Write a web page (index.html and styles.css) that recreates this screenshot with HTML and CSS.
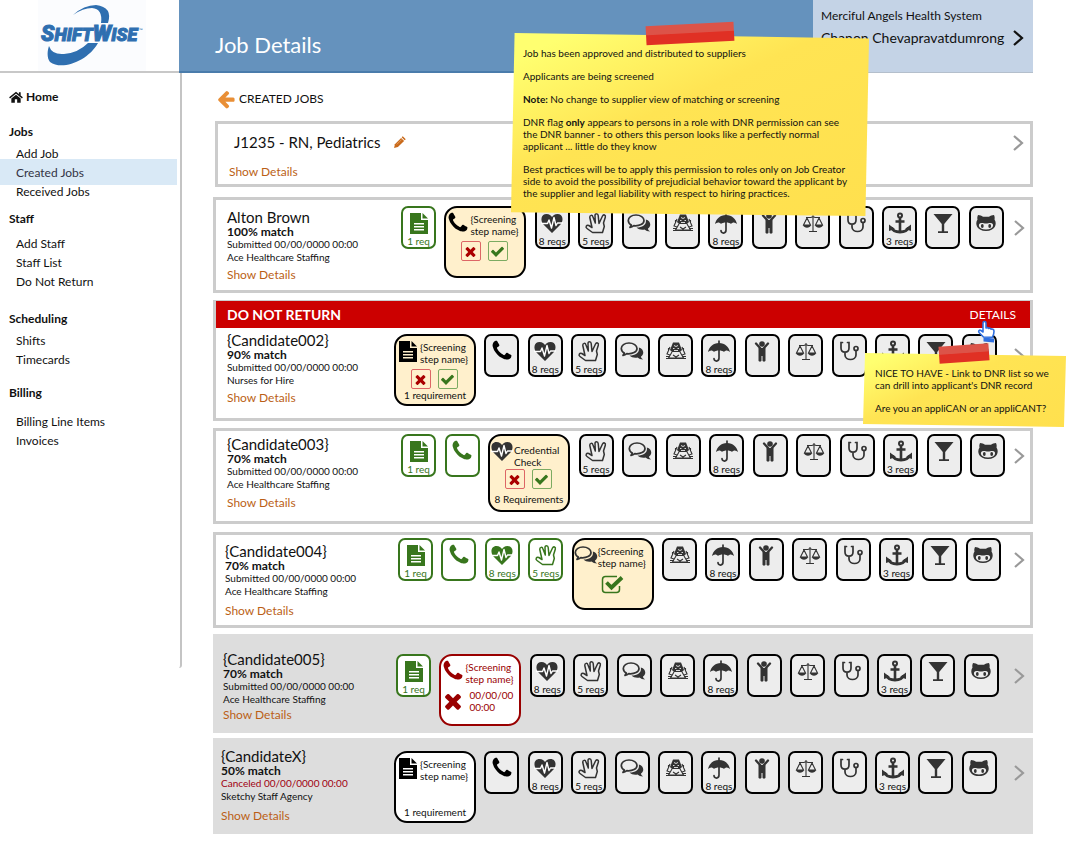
FILE: index.html
```html
<!DOCTYPE html>
<html lang="en">
<head>
<meta charset="utf-8">
<title>Job Details</title>
<link rel="stylesheet" href="styles.css">
</head>
<body>
<svg class="defs" aria-hidden="true">
  <symbol id="doc" viewBox="0 0 24 24"><path fill="currentColor" fill-rule="evenodd" d="M3 2h11v7h7v14H3zM7 12v1.500h10V12zM7 15v1.500h10V15zM7 18v1.500h10V18z"/><path fill="currentColor" d="M15.500 2L21 7.500H15.500z"/></symbol>
  <symbol id="phone" viewBox="0 0 1792 1792"><path fill="currentColor" d="M1600 1240q0 27-10 70.500t-21 68.500q-21 50-122 106-94 51-186 51-27 0-53-3.500t-57-12.500-47-14.500-55.500-20.500-49.500-18q-98-35-175-83-127-79-264-216t-216-264q-48-77-83-175-3-9-18-49.500t-20.500-55.500-14.500-47-12.500-57-3.500-53q0-92 51-186 56-101 106-122 25-11 68.500-21t70.500-10q14 0 21 3 18 6 53 76 11 19 30 54t35 63.500 31 53.500q3 4 17.500 25t21.500 35.500 7 28.500q0 20-28.500 50t-62 55-62 53-28.500 46q0 9 5 22.500t8.500 20.500 14 24 11.500 19q76 137 174 235t235 174q2 1 19 11.500t24 14 20.500 8.500 22.500 5q18 0 46-28.500t53-62 55-62 50-28.500q14 0 28.500 7t35.500 21.500 25 17.500q25 15 53.500 31t63.500 35 54 30q70 35 76 53 3 7 3 21z"/></symbol>
  <symbol id="heart" viewBox="0 0 24 24"><path fill="currentColor" d="M12 22L3.500 13.500C0 9.500 1 3 6.500 3 9.500 3 11 4.500 12 6c1-1.500 2.500-3 5.500-3C23 3 24 9.500 20.500 13.500z"/><path fill="none" stroke="#fff" stroke-width="1.400" stroke-linejoin="round" d="M1 12.500h6.500L9 9l2.500 8L14 6.500l2 8 1.500-2.500H23"/></symbol>
  <symbol id="hand" viewBox="0 0 24 24"><path fill="none" stroke="currentColor" stroke-width="1.500" stroke-linejoin="round" d="M8.500 21.500L3 17.500C1 16 2.500 13.700 4.800 14.500L8 16.500 5.800 6.500C5.500 4 8.300 3.500 9 6L11.300 12 11 4.500C11 2 14 2 14.200 4.500L15 12.500 18.500 5C19.500 3 22 4 21.300 6.300L19.500 12 20.300 15.500 18.500 21.500z"/></symbol>
  <symbol id="comments" viewBox="0 0 24 24"><path fill="currentColor" d="M18.800 8.500c5.500 1.300 5.500 7 2.200 9 0 1.500 1 2 2 3-2.500 0-4-.7-5.500-2-3 .5-6 0-8-2 6.500 0 10.300-3.300 9.300-8z"/><path fill="none" stroke="currentColor" stroke-width="1.700" stroke-linejoin="round" d="M9 4C4.500 4 1.300 6.500 1.300 9.500c0 2 1.200 3.500 3 4.500l-1.300 2.500c1.500-.3 2.800-1 3.800-1.800C12.500 15.200 17 13 17 9.500 17 6.500 13.500 4 9 4z"/></symbol>
  <symbol id="crew" viewBox="0 0 24 24"><path fill="currentColor" d="M9 3.500h6l3 7.500-2 2H8l-2-2z"/><path fill="none" stroke="currentColor" stroke-width="1.100" d="M6 8l-3 7 3 1M18 8l3 7-3 1M4.500 9v3M19.500 9v3M8 13l-3.500 6h15L16 13M2 17.500h4M18 17.500h4M2 19.500h20M9 16l3 2 3-2"/><path fill="none" stroke="#ededed" stroke-width=".9" d="M10 6.500l2 1 2-1M9 9.500h1.500M13.500 9.500H15M10 11.500h4"/></symbol>
  <symbol id="umbrella" viewBox="0 0 24 24"><path fill="currentColor" d="M12 4c6 0 10 4 11 9-2-2-4.500-2-6 0-1.500-2-8.500-2-10 0-1.500-2-4-2-6 0C2 8 6 4 12 4z"/><path fill="none" stroke="currentColor" stroke-width="1.700" stroke-linecap="round" d="M12 2v17c0 4-5 4-5 .5"/></symbol>
  <symbol id="child" viewBox="0 0 24 24"><circle cx="12" cy="5" r="2.800" fill="currentColor"/><path fill="none" stroke="currentColor" stroke-width="2.300" stroke-linecap="round" d="M6 4.500l4.500 5M18 4.500l-4.500 5"/><path fill="currentColor" d="M8.500 9h7v12.500c0 1.500-3 1.500-3 0V17h-1v4.500c0 1.500-3 1.500-3 0z"/></symbol>
  <symbol id="scale" viewBox="0 0 24 24"><g fill="none" stroke="currentColor" stroke-width="1.100"><path d="M12 4v16M8 20.500h8M5 6.500h5l2-1 2 1h5M6 7l-3.500 7h7zM18 7l-3.500 7h7z"/></g><path fill="currentColor" d="M2 14h8c-1 3.500-7 3.500-8 0zM14 14h8c-1 3.500-7 3.500-8 0z"/></symbol>
  <symbol id="steth" viewBox="0 0 24 24"><g fill="none" stroke="currentColor" stroke-width="1.700" stroke-linecap="round"><path d="M5.500 3.500H4V9c0 5.500 8 5.500 8 0V3.500h-1.500M8 13.500V16c0 6 11 6 11 0v-4"/><circle cx="19" cy="9.500" r="2"/></g></symbol>
  <symbol id="anchor" viewBox="0 0 24 24"><g fill="none" stroke="currentColor"><circle cx="12" cy="4.500" r="2" stroke-width="2"/><path stroke-width="2.600" d="M12 7v14M7.500 10.500h9"/><path stroke-width="2.800" d="M3.500 16.500c2 6 15 6 17 0"/></g><path fill="currentColor" d="M1 20v-6.500L7 18zM23 20v-6.500L17 18z"/></symbol>
  <symbol id="glass" viewBox="0 0 24 24"><path fill="currentColor" d="M2.500 3h19L13.200 13v7.300H17V22H7v-1.700h3.800V13z"/></symbol>
  <symbol id="cat" viewBox="0 0 24 24"><path fill="currentColor" fill-rule="evenodd" d="M4 4c2 0 3.500.8 5 1.700h6C16.500 4.800 18 4 20 4c1 2 .7 3.500.5 4.500 3 4.500.5 11.500-8.500 11.500S.5 13 3.500 8.500C3.300 7.500 3 6 4 4zM7.500 12c-4 0-4 6.500 4.500 6.500s8.500-6.500 4.500-6.500c-2 0-2.500.5-4.500.5s-2.500-.5-4.500-.5z"/><ellipse cx="8.300" cy="15" rx="1.400" ry="2" fill="currentColor"/><ellipse cx="15.700" cy="15" rx="1.400" ry="2" fill="currentColor"/></symbol>
  <symbol id="times" viewBox="0 0 1792 1792"><path fill="currentColor" d="M1490 1322q0 40-28 68l-136 136q-28 28-68 28t-68-28l-294-294-294 294q-28 28-68 28t-68-28l-136-136q-28-28-28-68t28-68l294-294-294-294q-28-28-28-68t28-68l136-136q28-28 68-28t68 28l294 294 294-294q28-28 68-28t68 28l136 136q28 28 28 68t-28 68l-294 294 294 294q28 28 28 68z"/></symbol>
  <symbol id="check" viewBox="0 0 1792 1792"><path fill="currentColor" d="M1671 566q0 40-28 68l-724 724-136 136q-28 28-68 28t-68-28l-136-136-362-362q-28-28-28-68t28-68l136-136q28-28 68-28t68 28l294 295 656-657q28-28 68-28t68 28l136 136q28 28 28 68z"/></symbol>
  <symbol id="checkbox" viewBox="0 0 24 24"><path fill="none" stroke="currentColor" stroke-width="1.500" d="M17 3.500H5.500a3 3 0 0 0-3 3v10a3 3 0 0 0 3 3h11a3 3 0 0 0 3-3V13"/><path fill="none" stroke="currentColor" stroke-width="3.800" d="M6.500 9.500l5 5L22 4.500"/></symbol>
  <symbol id="arrow" viewBox="0 0 1792 1792"><path fill="currentColor" d="M1664 896v128q0 53-32.500 90.500t-84.500 37.500h-704l293 294q38 36 38 90t-38 90l-75 76q-37 37-90 37-52 0-91-37l-651-652q-37-37-37-90 0-52 37-91l651-650q38-38 91-38 52 0 90 38l75 74q38 38 38 91t-38 91l-293 293h704q52 0 84.500 37.500t32.500 90.500z"/></symbol>
  <symbol id="home" viewBox="0 0 24 24"><path fill="currentColor" d="M12 8l8 6.500V22h-6v-6h-4v6H4v-7.500z"/><path fill="none" stroke="currentColor" stroke-width="2.400" d="M1 13.500L12 4.500l11 9"/><path fill="currentColor" d="M17 4h3v6l-3-2.500z"/></symbol>
  <symbol id="pencil" viewBox="0 0 24 24"><path fill="currentColor" d="M2 22l1.500-7L15 3.500l5.500 5.500L9 20.500z"/><path fill="currentColor" d="M16 2.500l2-2 5.500 5.500-2 2z"/><path stroke="#e8a468" stroke-width="1.500" d="M7 15.500L16 6.500"/></symbol>
  <symbol id="chevron" viewBox="0 0 12 20"><path fill="none" stroke="currentColor" stroke-width="2.200" d="M2 3l8 7-8 7"/></symbol>
</svg>

<div class="page">
<header class="top">
  <a class="logo" href="#" aria-label="ShiftWise">
    <svg viewBox="0 0 110 70" width="110" height="70">
      <g fill="#2f6fb0"><path d="M35 15Q46 5 58 5Q75 7 70 23H63Q65 9 54 8Q45 8 35 15z"/><path d="M11 46C9 52 9 58 12 62C24 71 50 61 60 43H50Q40 53 26 54Q14 55 11 46z"/>
      <text x="3" y="41" class="logo-text"><tspan class="logo-cap">S</tspan>HIFT<tspan class="logo-cap">W</tspan>ISE</text><text x="101" y="32" class="logo-tm">™</text></g>
    </svg>
  </a>
  <h1>Job Details</h1>
  <div class="account">
    <div class="org">Merciful Angels Health System</div>
    <button class="user" type="button"><span>Chanon Chevapravatdumrong</span><svg class="chev"><use href="#chevron"/></svg></button>
  </div>
</header>

<div class="body">
<nav class="side">
  <a class="home" href="#"><svg><use href="#home"/></svg>Home</a>
  <h2 class="jobs">Jobs</h2>
  <ul><li><a href="#">Add Job</a></li><li class="active"><a href="#">Created Jobs</a></li><li><a href="#">Received Jobs</a></li></ul>
  <h2 class="staff">Staff</h2>
  <ul><li><a href="#">Add Staff</a></li><li><a href="#">Staff List</a></li><li><a href="#">Do Not Return</a></li></ul>
  <h2 class="sched">Scheduling</h2>
  <ul><li><a href="#">Shifts</a></li><li><a href="#">Timecards</a></li></ul>
  <h2 class="billing">Billing</h2>
  <ul><li><a href="#">Billing Line Items</a></li><li><a href="#">Invoices</a></li></ul>
</nav>

<main>
  <a class="back" href="#"><svg><use href="#arrow"/></svg>CREATED JOBS</a>

  <section class="job">
    <div>
      <h2>J1235 - RN, Pediatrics <button type="button" class="plain edit" aria-label="Edit job"><svg><use href="#pencil"/></svg></button></h2>
      <a class="more" href="#">Show Details</a>
    </div>
    <button type="button" class="plain next" aria-label="Open job"><svg class="chev"><use href="#chevron"/></svg></button>
  </section>

  <article class="card alton">
    <div class="row">
      <div class="info"><h3>Alton Brown</h3><b>100% match</b><p>Submitted 00/00/0000 00:00</p><p>Ace Healthcare Staffing</p><a class="more" href="#">Show Details</a></div>
      <ul class="steps">
        <li class="done"><svg><use href="#doc"/></svg><span>1 req</span></li>
        <li class="big"><div class="head"><svg class="ink"><use href="#phone"/></svg><span>{Screening<br>step name}</span></div><div class="acts"><button type="button" class="no" aria-label="Reject"><svg><use href="#times"/></svg></button><button type="button" class="yes" aria-label="Approve"><svg><use href="#check"/></svg></button></div></li>
        <li><svg><use href="#heart"/></svg><span>8 reqs</span></li>
        <li><svg><use href="#hand"/></svg><span>5 reqs</span></li>
        <li><svg><use href="#comments"/></svg></li>
        <li><svg><use href="#crew"/></svg></li>
        <li><svg><use href="#umbrella"/></svg><span>8 reqs</span></li>
        <li><svg><use href="#child"/></svg></li>
        <li><svg><use href="#scale"/></svg></li>
        <li><svg><use href="#steth"/></svg></li>
        <li><svg><use href="#anchor"/></svg><span>3 reqs</span></li>
        <li><svg><use href="#glass"/></svg></li>
        <li><svg><use href="#cat"/></svg></li>
      </ul>
      <button type="button" class="plain next" aria-label="Open"><svg class="chev"><use href="#chevron"/></svg></button>
    </div>
  </article>

  <article class="card dnr">
    <div class="banner"><strong>DO NOT RETURN</strong><a href="#">DETAILS</a></div>
    <div class="row">
      <div class="info"><h3>{Candidate002}</h3><b>90% match</b><p>Submitted 00/00/0000 00:00</p><p>Nurses for Hire</p><a class="more" href="#">Show Details</a></div>
      <ul class="steps">
        <li class="big"><div class="head"><svg class="ink"><use href="#doc"/></svg><span>{Screening<br>step name}</span></div><div class="acts"><button type="button" class="no" aria-label="Reject"><svg><use href="#times"/></svg></button><button type="button" class="yes" aria-label="Approve"><svg><use href="#check"/></svg></button></div><div class="foot">1 requirement</div></li>
        <li><svg class="ink"><use href="#phone"/></svg></li>
        <li><svg><use href="#heart"/></svg><span>8 reqs</span></li>
        <li><svg><use href="#hand"/></svg><span>5 reqs</span></li>
        <li><svg><use href="#comments"/></svg></li>
        <li><svg><use href="#crew"/></svg></li>
        <li><svg><use href="#umbrella"/></svg><span>8 reqs</span></li>
        <li><svg><use href="#child"/></svg></li>
        <li><svg><use href="#scale"/></svg></li>
        <li><svg><use href="#steth"/></svg></li>
        <li><svg><use href="#anchor"/></svg><span>3 reqs</span></li>
        <li><svg><use href="#glass"/></svg></li>
        <li><svg><use href="#cat"/></svg></li>
      </ul>
      <button type="button" class="plain next" aria-label="Open"><svg class="chev"><use href="#chevron"/></svg></button>
    </div>
  </article>

  <article class="card c3">
    <div class="row">
      <div class="info"><h3>{Candidate003}</h3><b>70% match</b><p>Submitted 00/00/0000 00:00</p><p>Ace Healthcare Staffing</p><a class="more" href="#">Show Details</a></div>
      <ul class="steps">
        <li class="done"><svg><use href="#doc"/></svg><span>1 req</span></li>
        <li class="done"><svg><use href="#phone"/></svg></li>
        <li class="big tall"><div class="head"><svg><use href="#heart"/></svg><span>Credential<br>Check</span></div><div class="acts"><button type="button" class="no" aria-label="Reject"><svg><use href="#times"/></svg></button><button type="button" class="yes" aria-label="Approve"><svg><use href="#check"/></svg></button></div><div class="foot">8 Requirements</div></li>
        <li><svg><use href="#hand"/></svg><span>5 reqs</span></li>
        <li><svg><use href="#comments"/></svg></li>
        <li><svg><use href="#crew"/></svg></li>
        <li><svg><use href="#umbrella"/></svg><span>8 reqs</span></li>
        <li><svg><use href="#child"/></svg></li>
        <li><svg><use href="#scale"/></svg></li>
        <li><svg><use href="#steth"/></svg></li>
        <li><svg><use href="#anchor"/></svg><span>3 reqs</span></li>
        <li><svg><use href="#glass"/></svg></li>
        <li><svg><use href="#cat"/></svg></li>
      </ul>
      <button type="button" class="plain next" aria-label="Open"><svg class="chev"><use href="#chevron"/></svg></button>
    </div>
  </article>

  <article class="card c4">
    <div class="row">
      <div class="info"><h3>{Candidate004}</h3><b>70% match</b><p>Submitted 00/00/0000 00:00</p><p>Ace Healthcare Staffing</p><a class="more" href="#">Show Details</a></div>
      <ul class="steps">
        <li class="done"><svg><use href="#doc"/></svg><span>1 req</span></li>
        <li class="done"><svg><use href="#phone"/></svg></li>
        <li class="done"><svg><use href="#heart"/></svg><span>8 reqs</span></li>
        <li class="done"><svg><use href="#hand"/></svg><span>5 reqs</span></li>
        <li class="big"><div class="head"><svg><use href="#comments"/></svg><span>{Screening<br>step name}</span></div><div class="passed"><svg><use href="#checkbox"/></svg></div></li>
        <li><svg><use href="#crew"/></svg></li>
        <li><svg><use href="#umbrella"/></svg><span>8 reqs</span></li>
        <li><svg><use href="#child"/></svg></li>
        <li><svg><use href="#scale"/></svg></li>
        <li><svg><use href="#steth"/></svg></li>
        <li><svg><use href="#anchor"/></svg><span>3 reqs</span></li>
        <li><svg><use href="#glass"/></svg></li>
        <li><svg><use href="#cat"/></svg></li>
      </ul>
      <button type="button" class="plain next" aria-label="Open"><svg class="chev"><use href="#chevron"/></svg></button>
    </div>
  </article>

  <article class="card closed c5">
    <div class="row">
      <div class="info"><h3>{Candidate005}</h3><b>70% match</b><p>Submitted 00/00/0000 00:00</p><p>Ace Healthcare Staffing</p><a class="more" href="#">Show Details</a></div>
      <ul class="steps">
        <li class="done"><svg><use href="#doc"/></svg><span>1 req</span></li>
        <li class="big failed"><div class="head"><svg><use href="#phone"/></svg><span>{Screening<br>step name}</span></div><div class="when"><svg><use href="#times"/></svg><span>00/00/00<br>00:00</span></div></li>
        <li><svg><use href="#heart"/></svg><span>8 reqs</span></li>
        <li><svg><use href="#hand"/></svg><span>5 reqs</span></li>
        <li><svg><use href="#comments"/></svg></li>
        <li><svg><use href="#crew"/></svg></li>
        <li><svg><use href="#umbrella"/></svg><span>8 reqs</span></li>
        <li><svg><use href="#child"/></svg></li>
        <li><svg><use href="#scale"/></svg></li>
        <li><svg><use href="#steth"/></svg></li>
        <li><svg><use href="#anchor"/></svg><span>3 reqs</span></li>
        <li><svg><use href="#glass"/></svg></li>
        <li><svg><use href="#cat"/></svg></li>
      </ul>
      <button type="button" class="plain next" aria-label="Open"><svg class="chev"><use href="#chevron"/></svg></button>
    </div>
  </article>

  <article class="card closed cx">
    <div class="row">
      <div class="info"><h3>{CandidateX}</h3><b>50% match</b><p class="canceled">Canceled 00/00/0000 00:00</p><p>Sketchy Staff Agency</p><a class="more" href="#">Show Details</a></div>
      <ul class="steps">
        <li class="big blank"><div class="head"><svg class="ink"><use href="#doc"/></svg><span>{Screening<br>step name}</span></div><div class="foot">1 requirement</div></li>
        <li><svg class="ink"><use href="#phone"/></svg></li>
        <li><svg><use href="#heart"/></svg><span>8 reqs</span></li>
        <li><svg><use href="#hand"/></svg><span>5 reqs</span></li>
        <li><svg><use href="#comments"/></svg></li>
        <li><svg><use href="#crew"/></svg></li>
        <li><svg><use href="#umbrella"/></svg><span>8 reqs</span></li>
        <li><svg><use href="#child"/></svg></li>
        <li><svg><use href="#scale"/></svg></li>
        <li><svg><use href="#steth"/></svg></li>
        <li><svg><use href="#anchor"/></svg><span>3 reqs</span></li>
        <li><svg><use href="#glass"/></svg></li>
        <li><svg><use href="#cat"/></svg></li>
      </ul>
      <button type="button" class="plain next" aria-label="Open"><svg class="chev"><use href="#chevron"/></svg></button>
    </div>
  </article>
</main>
</div>

<svg class="cursor" viewBox="0 0 20 24" aria-hidden="true"><path fill="#fff" stroke="#2f6fe0" stroke-width="1.600" stroke-linejoin="round" d="M6.500 17L2 12.500C1 11 2.500 9.500 4 10.500L6 12V3c0-2 3-2 3 0v5c1-.7 2-.5 2.500.5 1-.7 2-.3 2.500.7 1-.5 3 0 3 2 0 2.500-.5 4-1.500 6z"/><path fill="#2f6fe0" d="M6.500 17.500l10.500 1v4l-10.500-1z"/></svg>

<aside class="note first">
  <div class="paper">
    <p>Job has been approved and distributed to suppliers</p>
    <p>Applicants are being screened</p>
    <p><b>Note:</b> No change to supplier view of matching or screening</p>
    <p>DNR flag <b>only</b> appears to persons in a role with DNR permission can see<br>the DNR banner - to others this person looks like a perfectly normal<br>applicant ... little do they know</p>
    <p>Best practices will be to apply this permission to roles only on Job Creator<br>side to avoid the possibility of prejudicial behavior toward the applicant by<br>the supplier and legal liability with respect to hiring practices.</p>
  </div>
  <div class="tape"></div>
</aside>
<aside class="note second">
  <div class="paper">
    <p>NICE TO HAVE - Link to DNR list so we<br>can drill into applicant's DNR record</p>
    <p>Are you an appliCAN or an appliCANT?</p>
  </div>
  <div class="tape"></div>
</aside>
</div>
</body>
</html>
```
FILE: styles.css
```css
* { box-sizing: border-box; }
body { margin: 0; background: #fff; color: #111; font: 12px/14px Lato, "Open Sans", sans-serif; }
h1, h2, h3, p, ul { margin: 0; padding: 0; font-weight: inherit; }
ul { list-style: none; }
a { color: inherit; text-decoration: none; }
svg { display: block; flex: none; }
button { font: inherit; color: inherit; cursor: pointer; padding: 0; }
.plain { border: 0; background: none; }
.defs { position: absolute; width: 0; height: 0; }

.page { position: relative; padding: 0 33px 12px 0; }

.top { display: grid; grid-template-columns: 179px 1fr 220px; height: 73px; }
.logo { padding-left: 38px; border-bottom: 2px solid #c8c8c8; background: linear-gradient(90deg, #fff 38px, #fbfcfe 38px, #fbfcfe 146px, #fff 146px); }
.logo-text { font: italic 900 18px Roboto, sans-serif; stroke: #2f6fb0; stroke-width: 1px; }
.logo-cap { font-size: 22px; }
.logo-tm { font: 5px Lato, sans-serif; }
.top h1 { padding: 32px 0 0 36px; background: #6592bd; border-bottom: 2px solid #4a7cab; color: #fff; font-size: 22px; line-height: 26px; }
.account { padding: 8px 9px 0 8px; background: #c4d3e6; border-bottom: 1px solid #b4bfcc; }
.org { font-size: 12px; line-height: 16px; }
.user { display: flex; width: 100%; justify-content: space-between; align-items: center; margin-top: 4px; border: 0; background: none; font-size: 14px; line-height: 18px; white-space: nowrap; }
.chev { width: 12px; height: 20px; }

.body { display: grid; grid-template-columns: 182px 1fr; align-items: start; }
.side { border-right: 2px solid #c4c4c4; border-bottom-right-radius: 3px; padding: 15px 3px 218px 0; font-size: 12px; }
.home { display: flex; align-items: center; gap: 3px; padding-left: 9px; height: 18px; font-weight: 700; }
.home svg { width: 14px; height: 14px; }
.side h2 { padding-left: 9px; font-size: 12px; line-height: 18px; font-weight: 700; }
.side .jobs { margin: 17px 0 3px; }
.side .staff { margin: 9px 0 6px; }
.side .sched { margin: 19px 0 3px; }
.side .billing { margin: 15px 0 10px; }
.side li { padding-left: 16px; line-height: 19px; }
.side .active { margin: -4px 0 -3px; padding-top: 4px; padding-bottom: 3px; background: #d9e9f6; color: #334; }

main { padding-left: 31px; }
.back { display: flex; align-items: center; gap: 3px; height: 20px; margin: 16px 0 12px 3px; font-size: 12px; }
.back svg { width: 20px; height: 20px; color: #e98f36; }
.more { color: #bb5f16; font-size: 12px; line-height: 16px; display: inline-block; }
.job { display: flex; justify-content: space-between; align-items: flex-start; min-height: 66px; margin-left: 2px; padding: 9px 6px 3px 11px; border: 3px solid #ccc; }
.job h2 { display: flex; gap: 13px; align-items: center; padding-left: 5px; margin-bottom: 13px; font-size: 15px; line-height: 18px; }
.edit svg { width: 13px; height: 13px; color: #c96a1b; }
.next { display: flex; justify-content: flex-end; color: #999; }

.card { min-height: 96px; border: 3px solid #ccc; --lead: 174px; --tail: 25px; --inset: 11px; }
.row { display: grid; grid-template-columns: var(--lead) 1fr var(--tail); padding: 0 5px 4px var(--inset); }
.info { padding-top: var(--info-top); white-space: nowrap; }
.info h3 { font-size: 15px; line-height: 16px; }
.info b { display: block; font-size: 12px; line-height: 13px; }
.info p { font-size: 10px; line-height: 13px; }
.info .more { margin-top: var(--more-gap); }
.row .next { align-items: center; height: 43px; margin-top: var(--steps-top); }
.steps { display: flex; justify-content: space-between; align-items: flex-start; margin-top: var(--steps-top); }

.alton { margin-top: 10px; --info-top: 9px; --steps-top: 6px; --more-gap: 3px; --lead: 174px; --tail: 21px; }
.dnr { margin-top: 7px; min-height: 121px; border-top-width: 1px; --info-top: 4px; --steps-top: 6px; --more-gap: 3px; --lead: 167px; --tail: 28px; }
.c3 { margin-top: 7px; --info-top: 5px; --steps-top: 3px; --more-gap: 4px; --lead: 174px; --tail: 20px; }
.c4 { margin-top: 8px; --info-top: 8px; --steps-top: 3px; --more-gap: 5px; --inset: 9px; --lead: 173px; --tail: 24px; }
.c5 { margin-top: 6px; min-height: 99px; --info-top: 14px; --steps-top: 17px; --more-gap: 1px; --inset: 7px; --lead: 173px; --tail: 26px; }
.cx { margin-top: 5px; --info-top: 7px; --steps-top: 10px; --more-gap: 5px; --inset: 5px; --lead: 173px; --tail: 28px; }
.closed { background: #ddd; border-color: #ddd; }
.canceled { color: #a00010; }

.banner { display: flex; justify-content: space-between; align-items: center; height: 27px; padding: 0 14px 0 11px; background: #c00; color: #fff; font-size: 12px; }
.banner strong { font-size: 14px; }

.steps li { display: flex; flex-direction: column; align-items: center; width: 35px; height: 43px; padding-top: 3px; border: 2px solid #000; border-radius: 7px; background: #ededed; color: #333; }
.steps svg { width: 24px; height: 24px; }
.steps .ink { color: #000; }
.steps li > span { font-size: 10px; line-height: 12px; color: #111; white-space: nowrap; }
.steps .done, .steps .done > span { color: #38761d; }
.steps .done { border-color: #38761d; background: #fff; }
.steps .big { align-items: stretch; width: 82px; height: 72px; padding: 3px 0 0; border-radius: 13px; background: #fff0cc; font-size: 10px; line-height: 12px; white-space: nowrap; }
.steps .tall { height: 78px; }
.head { display: flex; height: 30px; color: inherit; }
.head span { padding-top: 2px; color: #111; }
.tall .head span { padding-top: 5px; }
.acts { display: flex; justify-content: center; gap: 7px; padding-right: 2px; }
.acts button { width: 20px; height: 20px; display: grid; place-items: center; background: none; border: 1px solid; border-radius: 2px; }
.acts svg { width: 15px; height: 15px; }
.acts .no { color: #a00; border-color: #d66; }
.acts .yes { color: #38761d; border-color: #7cab62; }
.foot { margin-top: auto; padding-bottom: 3px; text-align: center; color: #111; }
.tall .foot { padding-bottom: 5px; }
.passed { display: flex; justify-content: center; padding-right: 2px; color: #38761d; }
.steps .failed { border-color: #900; background: #fff; color: #900; }
.failed .head span { color: #900; }
.failed .when { display: flex; gap: 4px; }
.steps .blank { background: #fff; }

.cursor { position: absolute; left: 977px; top: 320px; width: 20px; height: 24px; }
.note { position: absolute; font-size: 10px; line-height: 12px; color: #111; white-space: nowrap; }
.paper { background: linear-gradient(155deg, #ffff70 8%, #ffe453 42%, #ffe04e 100%); }
.paper p + p { margin-top: 11px; }
.tape { position: absolute; background: linear-gradient(#dc5348 45%, #e03024 50%); }
.first { left: 511px; top: 33px; }
.first .paper { width: 358px; padding: 14px 0 17px 12px; clip-path: polygon(1% 0, 100% 3%, 99% 100%, 0 98%); }
.first .tape { left: 135px; top: -9px; width: 88px; height: 19px; transform: rotate(-3deg); }
.second { left: 863px; top: 353px; }
.second .paper { width: 203px; padding: 14px 0 13px 12px; clip-path: polygon(1% 0, 100% 4%, 99% 100%, 0 96%); }
.second .tape { left: 76px; top: -8px; width: 50px; height: 17px; transform: rotate(-4deg); }
```
